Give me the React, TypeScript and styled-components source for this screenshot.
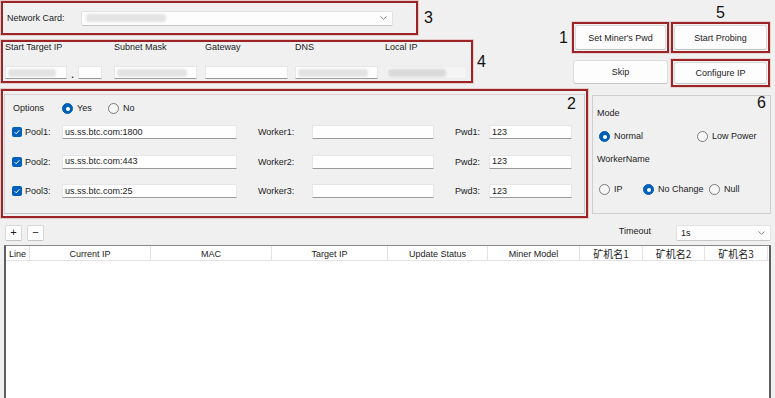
import React from "react";
import styled, { createGlobalStyle } from "styled-components";

const GlobalStyle = createGlobalStyle`
  html, body { margin: 0; padding: 0; background: #f0f0f0; }
  body {
    font-family: "Liberation Sans", Arial, "Noto Sans CJK SC", sans-serif;
    font-size: 9px;
    color: #1b1b1b;
  }
  * { box-sizing: border-box; }
`;

const RED = "#9c2326";
const BLUE = "#005fb8";

const Window = styled.div`
  width: 775px;
  height: 398px;
  overflow: hidden;
  background: #f0f0f0;
  display: flex;
  flex-direction: column;
`;

/* ---------- top area ---------- */

const TopSection = styled.div`
  display: flex;
  height: 89px;
`;

const TopLeft = styled.div`
  display: flex;
  flex-direction: column;
  gap: 5px;
  padding: 1px 0 0 1px;
`;

const TopRow = styled.div`
  display: flex;
  align-items: center;
`;

const RedFrame = styled.div<{ w: number; h: number }>`
  width: ${({ w }) => w}px;
  height: ${({ h }) => h}px;
  border: 2px solid ${RED};
  box-shadow: 0 0 0 1px rgba(200, 90, 90, 0.25);
`;

const NetFrame = styled(RedFrame)`
  display: flex;
  align-items: center;
  padding-left: 4px;
`;

const Tag = styled.span<{ ml?: number }>`
  font-size: 16px;
  line-height: 16px;
  color: #111;
  margin-left: ${({ ml }) => ml ?? 0}px;
`;

const FieldLabel = styled.span<{ w?: number }>`
  display: inline-block;
  width: ${({ w }) => (w ? `${w}px` : "auto")};
  white-space: nowrap;
  line-height: 11px;
`;

const Select = styled.div<{ w: number; h: number }>`
  width: ${({ w }) => w}px;
  height: ${({ h }) => h}px;
  background: #fdfdfd;
  border: 1px solid #e2e2e2;
  border-bottom-color: #c6c6c6;
  border-radius: 2px;
  display: flex;
  align-items: center;
  padding: 0 5px 0 4px;
  justify-content: space-between;
`;

const Blur = styled.div<{ w: number; tone?: string }>`
  width: ${({ w }) => w}px;
  height: 8px;
  border-radius: 3px;
  background: ${({ tone }) => tone ?? "#e3e3e3"};
  filter: blur(1.2px);
`;

const IpFrame = styled(RedFrame)`
  display: grid;
  grid-template-columns: 109px 91px 90px 90px 82px;
  padding: 0 0 0 2px;
`;

const IpField = styled.div`
  display: flex;
  flex-direction: column;
  gap: 13px;
`;

const IpInputs = styled.div`
  display: flex;
  align-items: flex-end;
`;

const TextBox = styled.div<{ w: number; h?: number; disabled?: boolean }>`
  width: ${({ w }) => w}px;
  height: ${({ h }) => h ?? 13}px;
  background: ${({ disabled }) => (disabled ? "#f5f5f5" : "#fefefe")};
  border: 1px solid ${({ disabled }) => (disabled ? "#ececec" : "#e6e6e6")};
  border-bottom-color: ${({ disabled }) => (disabled ? "#ececec" : "#9a9a9a")};
  border-radius: 1px;
  display: flex;
  align-items: center;
  padding-left: 2px;
  font-size: 9px;
  line-height: 9px;
  white-space: nowrap;
`;

const Dot = styled.span`
  width: 11px;
  text-align: center;
  font-weight: bold;
  line-height: 8px;
`;

const TopRight = styled.div`
  margin-left: auto;
  padding-right: 5px;
  display: grid;
  grid-template-columns: auto 97px 99px;
  grid-template-rows: 22px 31px 34px;
  column-gap: 2px;
  align-items: start;
`;

const GridTag = styled(Tag)`
  align-self: center;
  justify-self: center;
  padding-right: 2px;
`;

const TopTag = styled(Tag)`
  align-self: end;
  justify-self: center;
  padding-bottom: 1px;
`;

const ButtonFrame = styled.div<{ h: number; mt?: number }>`
  height: ${({ h }) => h}px;
  margin-top: ${({ mt }) => mt ?? 0}px;
  border: 2px solid ${RED};
  padding: 1px;
  box-shadow: 0 0 0 1px rgba(200, 90, 90, 0.2);
`;

const Button = styled.div<{ h?: number; mt?: number; inset?: number }>`
  height: ${({ h }) => (h ? `${h}px` : "100%")};
  margin: ${({ mt, inset }) => `${mt ?? 0}px ${inset ?? 0}px 0`};
  background: #fdfdfd;
  border: 1px solid #dcdcdc;
  border-bottom-color: #c4c4c4;
  border-radius: 3px;
  display: flex;
  align-items: center;
  justify-content: center;
  white-space: nowrap;
  font-size: 9px;
`;

/* ---------- middle area ---------- */

const MiddleSection = styled.div`
  display: flex;
  align-items: flex-start;
`;

const PoolFrame = styled.div`
  margin-left: 1px;
  width: 587px;
  height: 129px;
  border: 2px solid ${RED};
  padding: 3px 1px 2px 1px;
  box-shadow: 0 0 0 1px rgba(200, 90, 90, 0.25);
`;

const GroupBox = styled.div<{ w?: number; h?: number }>`
  position: relative;
  width: ${({ w }) => (w ? `${w}px` : "100%")};
  height: ${({ h }) => (h ? `${h}px` : "100%")};
  border: 1px solid #d4d4d4;
  border-bottom-color: #c2c2c2;
`;

const PoolInner = styled(GroupBox)`
  padding: 8px 0 0 7px;
  display: flex;
  flex-direction: column;
  gap: 11px;
  border-right-color: #c9c9c9;
`;

const OverTag = styled(Tag)`
  position: absolute;
`;

const OptionsRow = styled.div`
  display: flex;
  align-items: center;
  height: 11px;
  padding-left: 1px;
`;

const RadioOption = styled.label<{ w?: number }>`
  display: flex;
  align-items: center;
  gap: 4px;
  width: ${({ w }) => (w ? `${w}px` : "auto")};
  line-height: 11px;
  white-space: nowrap;
`;

const RadioDot = styled.span<{ on?: boolean }>`
  width: 11px;
  height: 11px;
  border-radius: 50%;
  flex-shrink: 0;
  background: ${({ on }) => (on ? BLUE : "#f7f7f7")};
  border: 1px solid ${({ on }) => (on ? BLUE : "#7a7a7a")};
  display: flex;
  align-items: center;
  justify-content: center;
  &::after {
    content: "";
    display: ${({ on }) => (on ? "block" : "none")};
    width: 4px;
    height: 4px;
    border-radius: 50%;
    background: #fff;
  }
`;

const PoolGrid = styled.div`
  display: grid;
  grid-template-columns: 50px 196px 54px 143px 34px 83px;
  row-gap: 15.5px;
  align-items: center;
  justify-items: start;
`;

const PoolCell = styled.div`
  display: flex;
  align-items: center;
  gap: 3px;
  height: 14px;
`;

const CheckBox = styled.span`
  width: 10px;
  height: 10px;
  border-radius: 2px;
  background: ${BLUE};
  display: flex;
  align-items: center;
  justify-content: center;
`;

const GridLabel = styled.span`
  white-space: nowrap;
  line-height: 14px;
`;

const SideBox = styled(GroupBox)`
  margin: 6px 0 0 4px;
  padding: 12px 0 0 4px;
  border-color: #cfcfcf;
  display: flex;
  flex-direction: column;
`;

const SideLabel = styled.span<{ mt?: number }>`
  line-height: 10px;
  margin-top: ${({ mt }) => mt ?? 0}px;
`;

const SideRow = styled.div<{ mt: number }>`
  display: flex;
  align-items: center;
  margin-top: ${({ mt }) => mt}px;
  padding-left: 2px;
`;

/* ---------- toolbar + table ---------- */

const Toolbar = styled.div`
  display: flex;
  align-items: center;
  height: 17px;
  margin-top: 6px;
  padding: 0 4px 0 5px;
  gap: 5px;
`;

const SmallButton = styled.div`
  width: 17px;
  height: 16px;
  background: #fdfdfd;
  border: 1px solid #d8d8d8;
  border-bottom-color: #c2c2c2;
  border-radius: 2px;
  display: flex;
  align-items: center;
  justify-content: center;
  font-size: 11px;
  line-height: 11px;
`;

const TimeoutLabel = styled.span`
  margin-left: auto;
  margin-right: 20px;
  line-height: 10px;
  margin-top: -3px;
`;

const Table = styled.div`
  flex: 1;
  margin: 4px 4px 0 4px;
  background: #fff;
  border-left: 2px solid #5e5e5e;
  border-right: 2px solid #5e5e5e;
  border-top: 1px solid #8a8a8a;
`;

const HeaderRow = styled.div`
  display: grid;
  grid-template-columns: 24px 121px 121px 116px 100px 92px 63px 62px 63px 1fr;
  height: 15px;
  border-bottom: 1px solid #e3e3e3;
`;

const HeaderCell = styled.div`
  display: flex;
  align-items: center;
  justify-content: center;
  border-right: 1px solid #e3e3e3;
  white-space: nowrap;
  font-size: 9px;
  color: #222;
  &:last-child {
    border-right: none;
  }
`;

const CjkCell = styled(HeaderCell)`
  font-family: "Noto Sans CJK SC", "Liberation Sans", sans-serif;
  font-size: 10px;
`;

const Chevron: React.FC = () => (
  <svg width="7" height="4" viewBox="0 0 7 4">
    <polyline points="0.5,0.5 3.5,3.3 6.5,0.5" fill="none" stroke="#7a7a7a" strokeWidth="0.9" />
  </svg>
);

const Check: React.FC = () => (
  <svg width="8" height="8" viewBox="0 0 8 8">
    <polyline points="1.6,4.2 3.2,5.8 6.4,2.2" fill="none" stroke="#fff" strokeWidth="1" />
  </svg>
);

const pools = [
  { n: 1, url: "us.ss.btc.com:1800" },
  { n: 2, url: "us.ss.btc.com:443" },
  { n: 3, url: "us.ss.btc.com:25" },
];

const headers = ["Line", "Current IP", "MAC", "Target IP", "Update Status", "Miner Model"];
const cjkHeaders = ["矿机名1", "矿机名2", "矿机名3"];

const App: React.FC = () => {
  return (
    <Window>
      <GlobalStyle />
      <TopSection>
        <TopLeft>
          <TopRow>
            <NetFrame w={417} h={34}>
              <FieldLabel w={74}>Network Card:</FieldLabel>
              <Select w={312} h={15}>
                <Blur w={80} />
                <Chevron />
              </Select>
            </NetFrame>
            <Tag ml={6}>3</Tag>
          </TopRow>
          <TopRow>
            <IpFrame w={472} h={43}>
              <IpField>
                <FieldLabel>Start Target IP</FieldLabel>
                <IpInputs>
                  <TextBox w={62}><Blur w={48} /></TextBox>
                  <Dot>.</Dot>
                  <TextBox w={24} />
                </IpInputs>
              </IpField>
              <IpField>
                <FieldLabel>Subnet Mask</FieldLabel>
                <IpInputs>
                  <TextBox w={83}><Blur w={70} /></TextBox>
                </IpInputs>
              </IpField>
              <IpField>
                <FieldLabel>Gateway</FieldLabel>
                <IpInputs>
                  <TextBox w={83} />
                </IpInputs>
              </IpField>
              <IpField>
                <FieldLabel>DNS</FieldLabel>
                <IpInputs>
                  <TextBox w={83}><Blur w={70} /></TextBox>
                </IpInputs>
              </IpField>
              <IpField>
                <FieldLabel>Local IP</FieldLabel>
                <IpInputs>
                  <TextBox w={82} disabled><Blur w={58} tone="#dadada" /></TextBox>
                </IpInputs>
              </IpField>
            </IpFrame>
            <Tag ml={4}>4</Tag>
          </TopRow>
        </TopLeft>

        <TopRight>
          <span />
          <span />
          <TopTag>5</TopTag>

          <GridTag>1</GridTag>
          <ButtonFrame h={31}>
            <Button>Set Miner's Pwd</Button>
          </ButtonFrame>
          <ButtonFrame h={31}>
            <Button>Start Probing</Button>
          </ButtonFrame>

          <span />
          <Button h={24} mt={7} inset={1}>Skip</Button>
          <ButtonFrame h={28} mt={6}>
            <Button>Configure IP</Button>
          </ButtonFrame>
        </TopRight>
      </TopSection>

      <MiddleSection>
        <PoolFrame>
          <PoolInner>
            <OverTag style={{ top: 1, right: 8 }}>2</OverTag>
            <OptionsRow>
              <FieldLabel w={49}>Options</FieldLabel>
              <RadioOption w={46}>
                <RadioDot on />
                Yes
              </RadioOption>
              <RadioOption>
                <RadioDot />
                No
              </RadioOption>
            </OptionsRow>
            <PoolGrid>
              {pools.map((p) => (
                <React.Fragment key={p.n}>
                  <PoolCell>
                    <CheckBox><Check /></CheckBox>
                    <GridLabel>Pool{p.n}:</GridLabel>
                  </PoolCell>
                  <TextBox w={175} h={14}>{p.url}</TextBox>
                  <GridLabel>Worker{p.n}:</GridLabel>
                  <TextBox w={122} h={14} />
                  <GridLabel>Pwd{p.n}:</GridLabel>
                  <TextBox w={83} h={14}>123</TextBox>
                </React.Fragment>
              ))}
            </PoolGrid>
          </PoolInner>
        </PoolFrame>

        <SideBox w={179} h={119}>
          <OverTag style={{ top: -1, right: 4 }}>6</OverTag>
          <SideLabel>Mode</SideLabel>
          <SideRow mt={13}>
            <RadioOption w={98}>
              <RadioDot on />
              Normal
            </RadioOption>
            <RadioOption>
              <RadioDot />
              Low Power
            </RadioOption>
          </SideRow>
          <SideLabel mt={12}>WorkerName</SideLabel>
          <SideRow mt={20}>
            <RadioOption w={44}>
              <RadioDot />
              IP
            </RadioOption>
            <RadioOption w={66}>
              <RadioDot on />
              No Change
            </RadioOption>
            <RadioOption>
              <RadioDot />
              Null
            </RadioOption>
          </SideRow>
        </SideBox>
      </MiddleSection>

      <Toolbar>
        <SmallButton>+</SmallButton>
        <SmallButton>−</SmallButton>
        <TimeoutLabel>Timeout</TimeoutLabel>
        <Select w={95} h={16}>
          <span>1s</span>
          <Chevron />
        </Select>
      </Toolbar>

      <Table>
        <HeaderRow>
          {headers.map((h) => (
            <HeaderCell key={h}>{h}</HeaderCell>
          ))}
          {cjkHeaders.map((h) => (
            <CjkCell key={h}>{h}</CjkCell>
          ))}
          <HeaderCell />
        </HeaderRow>
      </Table>
    </Window>
  );
};

export default App;
